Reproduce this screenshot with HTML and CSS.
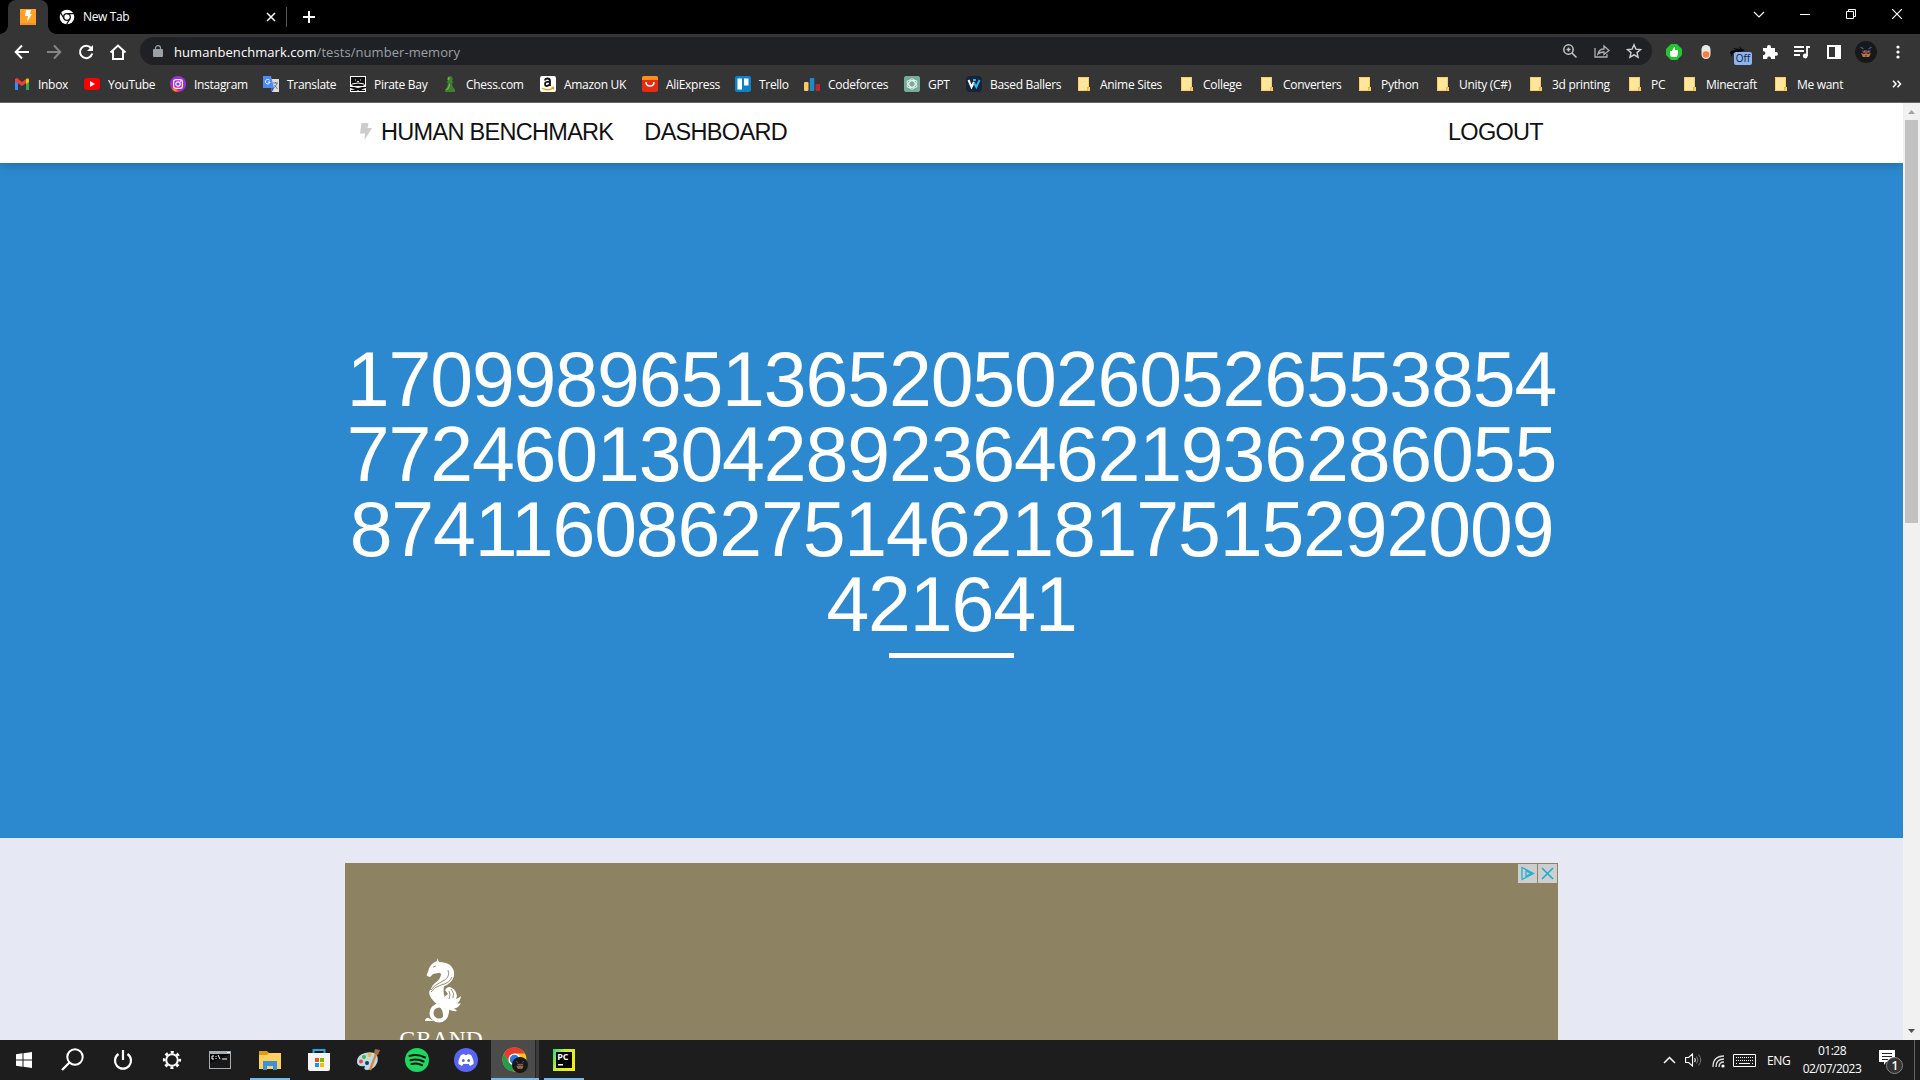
FILE: index.html
```html
<!DOCTYPE html>
<html lang="en">
<head>
<meta charset="utf-8">
<title>Human Benchmark</title>
<link rel="stylesheet" href="styles.css">
</head>
<body>
<svg class="defs" width="0" height="0">
  <symbol id="folder" viewBox="0 0 16 16"><path fill="#f7cf62" d="M2 1h11v10h1v4H2z"/><path fill="#ffe69c" d="M3 2h9v9l-1 3H3z"/><path fill="#e9b93d" d="M11 11h2v1h-1v3h-1z"/></symbol>
  <symbol id="avatar" viewBox="0 0 22 22"><circle cx="11" cy="11" r="11" fill="#17181a"/><path d="M5.500 6l3 2M16.500 6l-3 2" stroke="#3a5f96" stroke-width="1.200"/><path d="M7 9l2 1 2-1 2 1 3-1-1.500 3H8z" fill="#8f3f52"/><path d="M6 12l3 1 2-1 2 1 3-1-2 4H8z" fill="#b97a30"/><path d="M9 9.500h1v1.500H9zM13 9.500h1V11h-1z" fill="#4a94b5"/><path d="M10 14h2v1.500h-2z" fill="#743a80"/></symbol>
</svg>
<div class="screen">
  <header class="tabstrip">
    <div class="tab-active"><svg width="16" height="16" viewBox="0 0 16 16"><path fill="#ffa126" d="M0 0h16v16H0z"/><path fill="#f39220" d="M0 14h16v2H0z"/><path fill="#fff" d="M6 1h5L10 5h2L7 13l1-6H5z"/></svg></div>
    <div class="tab">
      <svg width="16" height="16" viewBox="0 0 16 16"><circle cx="8" cy="8" r="7.300" fill="#fff"/><circle cx="8" cy="8" r="3.300" fill="#fff" stroke="#111" stroke-width="1.300"/><path d="M8 4.700h7M5.100 9.700 1.700 3.900M10.900 9.700 7.500 15.500" stroke="#111" stroke-width="1.200"/></svg>
      <span class="tab-title">New Tab</span>
      <svg class="tab-close" width="10" height="10" viewBox="0 0 10 10"><path d="M1 1l8 8M9 1 1 9" stroke="#fff" stroke-width="1.500"/></svg>
    </div>
    <svg class="plus" width="12" height="12" viewBox="0 0 12 12"><path d="M6 0v12M0 6h12" stroke="#fff" stroke-width="2"/></svg>
    <div class="window-buttons">
      <svg width="12" height="12" viewBox="0 0 12 12"><path d="M1 4l5 5 5-5" fill="none" stroke="#fff" stroke-width="1.100"/></svg>
      <svg width="10" height="12" viewBox="0 0 10 12"><path d="M0 6.500h10" stroke="#fff"/></svg>
      <svg width="10" height="10" viewBox="0 0 10 10"><path d="M.5 2.500h7v7h-7zM2.500 2.500v-2h7v7h-2" fill="none" stroke="#fff"/></svg>
      <svg width="10" height="10" viewBox="0 0 10 10"><path d="M0 0l10 10M10 0 0 10" stroke="#fff" stroke-width="1.200"/></svg>
    </div>
  </header>

  <div class="toolbar">
    <div class="nav-buttons">
      <svg width="16" height="16" viewBox="0 0 16 16"><path d="M15 8H2M8 1.500 1.700 8 8 14.500" fill="none" stroke="#fff" stroke-width="2"/></svg>
      <svg width="16" height="16" viewBox="0 0 16 16"><path d="M1 8h13M8 1.500 14.300 8 8 14.500" fill="none" stroke="#858585" stroke-width="2"/></svg>
      <svg width="16" height="16" viewBox="0 0 16 16"><path d="M13 4A6.200 6.200 0 1 0 14.200 9.500" fill="none" stroke="#fff" stroke-width="2"/><path d="M15 1v6H9z" fill="#fff"/></svg>
      <svg width="18" height="16" viewBox="0 0 18 16"><path d="M1.500 8.500 9 1.500l7.500 7M4 7v8h10V7" fill="none" stroke="#fff" stroke-width="2"/></svg>
    </div>
    <div class="omnibox">
      <svg width="10" height="12" viewBox="0 0 10 12"><path fill="#9aa0a6" d="M1 4h8q1 0 1 1v6q0 1-1 1H1q-1 0-1-1V5q0-1 1-1z"/><path d="M2.500 5V3a2.500 2.300 0 0 1 5 0v2" fill="none" stroke="#9aa0a6" stroke-width="1.200"/></svg>
      <span class="url"><b>humanbenchmark.com</b>/tests/number-memory</span>
      <div class="omni-actions">
        <svg width="16" height="16" viewBox="0 0 16 16"><g fill="none" stroke="#c3c4c6" stroke-width="1.500"><circle cx="6.500" cy="6.500" r="4.700"/><path d="M10 10l4.500 4.500M6.500 4.500v4M4.500 6.500h4"/></g></svg>
        <svg width="16" height="16" viewBox="0 0 16 16"><g fill="none" stroke="#aeb0b3" stroke-width="1.300"><path d="M1 5v9h12v-3M4 11q1-5 6-5V3l5 4.500-5 4V9Q6 9 4 11z"/></g></svg>
        <svg width="16" height="16" viewBox="0 0 16 16"><path d="M8 1.800l1.900 4.300 4.700.4L11 9.600l1.100 4.600L8 11.800l-4.100 2.400L5 9.600 1.400 6.500l4.700-.4z" fill="none" stroke="#cfcfd1" stroke-width="1.400"/></svg>
      </div>
    </div>
    <div class="extensions">
      <svg width="16" height="16" viewBox="0 0 16 16"><path fill="#20c72f" d="M5 0h6l5 5v6l-5 5H5l-5-5V5z"/><path fill="#fff" d="M4 7h2l2-4h1v3h3v3l-1 4H6l-2-1z"/></svg>
      <svg width="16" height="16" viewBox="0 0 16 16"><rect x="3.500" y="1" width="9" height="14" rx="4.500" fill="#e8e8e6"/><circle cx="8" cy="10.500" r="3.300" fill="#fa7a38"/></svg>
      <div class="ext-off"><svg width="16" height="14" viewBox="0 0 16 14"><path d="M1 6l5-1L3 3l7 1-1-3 3 3 3 1-4 2 4 2-6-1-6 0-2 4V9l-1-1z" fill="#050505"/></svg><span class="off">Off</span></div>
      <svg width="16" height="16" viewBox="0 0 16 16"><path fill="#fff" d="M1 4h4V3a2 2 0 0 1 4 0v1h4v4h1a1.900 1.900 0 0 1 0 3.800h-1V15H9v-1a2 2 0 0 0-3.800 0v1H1v-4h1a2 2 0 0 0 0-3.800H1z"/></svg>
      <svg width="16" height="16" viewBox="0 0 16 16"><path d="M0 3h10M0 7h10M0 11h6M13 12V3h3" fill="none" stroke="#fff" stroke-width="1.800"/><circle cx="11.300" cy="12" r="2.400" fill="#fff"/></svg>
      <svg width="16" height="16" viewBox="0 0 16 16"><path d="M2 2h12v12H2z" fill="none" stroke="#fff" stroke-width="2"/><path fill="#fff" d="M9 1h6v14H9z"/></svg>
      <svg width="22" height="22"><use href="#avatar"/></svg>
      <svg width="16" height="16" viewBox="0 0 16 16"><g fill="#fff"><circle cx="8" cy="3" r="1.600"/><circle cx="8" cy="8" r="1.600"/><circle cx="8" cy="13" r="1.600"/></g></svg>
    </div>
  </div>

  <nav class="bookmarks">
    <a><svg viewBox="0 0 16 16"><path fill="#4285f4" d="M1 4v10h3V6z"/><path fill="#34a853" d="M15 4v10h-3V6z"/><path fill="#ea4335" d="M1 3l2-1 5 4 4-3v4l-4 3-7-5z"/><path fill="#fbbc04" d="M12 3q3-2 3 1v2l-3 2z"/></svg>Inbox</a>
    <a><svg viewBox="0 0 16 16"><rect y="2" width="16" height="12" rx="3" fill="#f00"/><path fill="#fff" d="M6 5l5 3-5 3z"/></svg>YouTube</a>
    <a><svg viewBox="0 0 16 16"><defs><radialGradient id="insta" cx=".25" cy="1"><stop offset="0" stop-color="#fed94f"/><stop offset=".35" stop-color="#fa6d31"/><stop offset=".65" stop-color="#f0128b"/><stop offset="1" stop-color="#a42ce0"/></radialGradient></defs><circle cx="8" cy="8" r="8" fill="url(#insta)"/><g fill="none" stroke="#fff" stroke-width="1.200"><rect x="3.600" y="3.600" width="8.800" height="8.800" rx="2.400"/><circle cx="8" cy="8" r="2.200"/></g><circle cx="10.700" cy="5.300" r=".7" fill="#fff"/></svg>Instagram</a>
    <a><svg viewBox="0 0 16 16"><path fill="#ddd" d="M6 3h10v13H9z"/><path fill="#4c8bf5" d="M0 0h8l3 12H0z"/><path d="M8 12h3l-2 4z" fill="#2857c4"/><path d="M6.500 4.200A2.300 2.300 0 1 0 7 6H5" fill="none" stroke="#fff"/><path d="M10 7h5M12.500 6v1M14 7q-1 4-3.500 5M11.500 9l3 4" fill="none" stroke="#647b88"/></svg>Translate</a>
    <a><svg viewBox="0 0 16 16"><path fill="#fff" d="M0 0h16v16H0z"/><path d="M1 1h14v7l-2 2H3L1 8zM0 11h4l4 1 4-1h4v1l-5 1.500 4 .5v1H9l-1-1-1 1H1v-1l4-.5L0 12z" fill="#111"/><path d="M2 8q6-2 12 0" fill="none" stroke="#fff"/><path d="M5 3.500h1v1H5zM10 3.500h1v1h-1zM7 5h2v1H7z" fill="#ddd"/></svg>Pirate Bay</a>
    <a><svg viewBox="0 0 16 16"><path fill="#427e31" d="M8 0a3 3 0 0 1 2 5l1.500 1L10 7.500q0 3.500 3 6V16H3v-2.500q3-2.500 3-6L4.500 6 6 5a3 3 0 0 1 2-5z"/><path fill="#7fb85a" d="M7 1q-2 1-1 3l2-1zM7 8h1q0 4-3 6H4q3-3 3-6"/></svg>Chess.com</a>
    <a><svg viewBox="0 0 16 16"><rect width="16" height="16" rx="2" fill="#fff"/><path d="M5 4.500Q5 2.500 7.500 2.500T10 5v5M9.500 5.700Q5 5.700 5 8t2 2 3-2.300" fill="none" stroke="#111" stroke-width="1.800"/><path d="M2 12q6 3.500 11 0M11.500 11.500h2v2" fill="none" stroke="#f90" stroke-width="1.300"/></svg>Amazon UK</a>
    <a><svg viewBox="0 0 16 16"><rect width="16" height="16" rx="2" fill="#e52d14"/><path d="M0 4V2q0-2 2-2h12q2 0 2 2v2z" fill="#ff8f17"/><path d="M4 6q0 4 4 4t4-4" fill="none" stroke="#fff" stroke-width="1.500"/></svg>AliExpress</a>
    <a><svg viewBox="0 0 16 16"><rect width="16" height="16" rx="2" fill="#0c82cc"/><path fill="#fff" d="M2.500 2.500H7v11H2.500zM9 2.500h4.500v7H9z"/></svg>Trello</a>
    <a><svg viewBox="0 0 16 16"><rect y="6" width="4.500" height="9" rx="1" fill="#f9cb57"/><rect x="5.800" y="2" width="4.500" height="13" rx="1" fill="#1d8bcb"/><rect x="11.500" y="8" width="4.500" height="7" rx="1" fill="#b42932"/></svg>Codeforces</a>
    <a><svg viewBox="0 0 16 16"><rect width="16" height="16" rx="2" fill="#76aa9b"/><g fill="none" stroke="#e6f4ef" stroke-width=".9"><ellipse cx="8" cy="8" rx="3" ry="5.400"/><ellipse cx="8" cy="8" rx="3" ry="5.400" transform="rotate(60 8 8)"/><ellipse cx="8" cy="8" rx="3" ry="5.400" transform="rotate(120 8 8)"/></g></svg>GPT</a>
    <a><svg viewBox="0 0 16 16"><rect width="16" height="16" rx="4" fill="#14243a"/><path d="M2.500 4l3 7L8 6" fill="none" stroke="#fff" stroke-width="2"/><path d="M8 7l2.300 4L13.500 4M7 4h3" fill="none" stroke="#2eb4f3" stroke-width="2"/></svg>Based Ballers</a>
    <a><svg><use href="#folder"/></svg>Anime Sites</a>
    <a><svg><use href="#folder"/></svg>College</a>
    <a><svg><use href="#folder"/></svg>Converters</a>
    <a><svg><use href="#folder"/></svg>Python</a>
    <a><svg><use href="#folder"/></svg>Unity (C#)</a>
    <a><svg><use href="#folder"/></svg>3d printing</a>
    <a><svg><use href="#folder"/></svg>PC</a>
    <a><svg><use href="#folder"/></svg>Minecraft</a>
    <a><svg><use href="#folder"/></svg>Me want</a>
    <svg class="more" width="10" height="8" viewBox="0 0 10 8"><path d="M1 .8 4 4 1 7.200M5.500.8l3 3.200-3 3.200" fill="none" stroke="#fff" stroke-width="1.500"/></svg>
  </nav>

  <div class="viewport">
    <main class="page">
      <div class="site-nav"><div class="container nav-row">
        <a class="brand"><svg width="12" height="18" viewBox="0 0 12 18"><path fill="#ccc" d="M1.500 0h7L7.500 5H12L4.500 17 5 10.500H0z"/></svg>HUMAN BENCHMARK</a>
        <a>DASHBOARD</a>
        <a class="logout">LOGOUT</a>
      </div></div>
      <section class="test"><div class="container">
        <div class="number">170998965136520502605265538547724601304289236462193628605587411608627514621817515292009421641</div>
        <div class="timer"></div>
      </div></section>
      <section class="below"><div class="container ad">
        <div class="ad-logo">
          <svg width="38" height="66" viewBox="0 0 38 66"><g fill="#fff"><path d="M12 0l2 4q13 0 15 10 1 8-7 13-9 3-16 8-1-6 4-10 6-4 6-9-1-2-3-1l-5 1-3 3-3-1q-1-2 1-4 1-8 9-11z"/><path d="M5 32q6-4 15-7-3 8 0 15 5 6 4 14-1 6-7 9 3-8-2-14-6-5-9-9-3-5-1-8z"/><path d="M19 42q0-4 4-6l-3-4q3-5 7-2 4 2 5 8l-1 3q3-1 5-3-1 6-4 7 2 1 4 0-3 6-7 5l3 3q-7 1-13-5zM0 62q2-4 5-1l4 2H0z"/></g><circle cx="14" cy="55" r="7.500" fill="none" stroke="#fff" stroke-width="4"/><g fill="none" stroke="#8d8262" stroke-width=".9"><path d="M23 12q3 8-7 12-8 4-10 8M27 19q-2 6-11 8-7 2-10 7M26 31q4 4 2 9M24 33q2 4 0 8M8 9l3-1"/></g></svg>
          <span>GRAND</span>
        </div>
        <div class="ad-choices">
          <i><svg width="15" height="15" viewBox="0 0 15 15"><path d="M2 1.500v12L13.500 7.500zM6 5v5.500l5-3z" fill="none" stroke="#25b1cf" stroke-width="1.300"/></svg></i>
          <i><svg width="13" height="13" viewBox="0 0 13 13"><path d="M1 1l11 11M12 1 1 12" stroke="#12afd0" stroke-width="1.500"/></svg></i>
        </div>
      </div></section>
    </main>
    <aside class="scrollbar">
      <svg width="17" height="17" viewBox="0 0 17 17"><path fill="#a3a3a3" d="M5 11l3.500-4 3.500 4z"/></svg>
      <div class="thumb"></div>
      <svg class="down" width="17" height="17" viewBox="0 0 17 17"><path fill="#505050" d="M5 6h7l-3.500 4z"/></svg>
    </aside>
  </div>

  <footer class="taskbar">
    <div class="apps">
      <div><svg class="nudge" width="16" height="16" viewBox="0 0 16 16"><path fill="#fff" d="M0 2.300 6.500 1.300v6.200H0zM7.500 1.200 16 0v7.500H7.500zM0 8.500h6.500v6.200L0 13.700zM7.500 8.500H16V16l-8.500-1.200z"/></svg></div>
      <div><svg class="nudge" width="24" height="24" viewBox="0 0 24 24"><circle cx="14" cy="9" r="7.700" fill="none" stroke="#fff" stroke-width="2"/><path d="M8.500 14.500l-7.500 7.500" stroke="#fff" stroke-width="2.300"/></svg></div>
      <div><svg width="20" height="22" viewBox="0 0 20 22"><path d="M5.500 5a8 8 0 1 0 9 0M10 1v10" fill="none" stroke="#fff" stroke-width="2.200"/></svg></div>
      <div><svg width="20" height="20" viewBox="0 0 20 20"><circle cx="10" cy="10" r="5.800" fill="none" stroke="#fff" stroke-width="2"/><circle cx="10" cy="10" r="7.800" fill="none" stroke="#fff" stroke-width="2.600" stroke-dasharray="3 3.126" stroke-dashoffset="1.500"/></svg></div>
      <div><svg class="nudge" width="22" height="20" viewBox="0 0 22 20"><path fill="#a5adb3" d="M0 1h22v18H0z"/><path fill="#050505" d="M1 4h20v14H1z"/><path fill="#373737" d="M1 13 21 4v14H1z" opacity=".4"/><path d="M18 2.500h3M5 6H3v3h2M7 6v1M7 8v1M9 5l2 4M13 9h5" fill="none" stroke="#fff"/></svg></div>
      <div class="open"><svg width="22" height="19" viewBox="0 0 22 19"><path fill="#e19b12" d="M0 0h8l2 2h12v4H0z"/><path fill="#ffd15c" d="M0 4h8l2-2h12v16H0z"/><path fill="#3b91dc" d="M4 10h14v9h-4v-4H8v4H4z"/></svg></div>
      <div><svg width="24" height="24" viewBox="0 0 24 24"><path d="M6.500 7V2h11v5" fill="none" stroke="#22a8e8" stroke-width="2"/><path fill="#f4f4f4" d="M1 5h22v16q0 2-2 2H3q-2 0-2-2z"/><path fill="#f25022" d="M8 10h4v4H8z"/><path fill="#7fba00" d="M13 10h4v4h-4z"/><path fill="#00a4ef" d="M8 15h4v4H8z"/><path fill="#ffb900" d="M13 15h4v4h-4z"/></svg></div>
      <div><svg width="24" height="24" viewBox="0 0 24 24"><path fill="#b9dcef" d="M1 14q0-7 8-9 7-2 11 1 3 4 1 9-3 7-10 7-4 0-2-4-8 1-8-4z"/><circle cx="5" cy="13.500" r="2" fill="#e64b3b"/><circle cx="8" cy="9" r="2" fill="#56af38"/><circle cx="13.500" cy="7" r="2" fill="#edbb24"/><circle cx="11" cy="15" r="2" fill="#273b4d"/><path d="M14 22 20 6" stroke="#e8832d" stroke-width="2.300"/><path d="M18 5l1-4 5 1-2 5z" fill="#a36b42"/></svg></div>
      <div><svg width="24" height="24" viewBox="0 0 24 24"><circle cx="12" cy="12" r="12" fill="#1ed760"/><path d="M4.500 8q8-2.500 15.500 1.500M5.500 12.200q7-2 13 1.300M6.500 16q6-1.500 10.500 1.200" fill="none" stroke="#111" stroke-width="2.100" stroke-linecap="round"/></svg></div>
      <div><svg width="24" height="24" viewBox="0 0 24 24"><circle cx="12" cy="12" r="12" fill="#5865f2"/><path fill="#fff" d="M7 7l3-1 1 1h2l1-1 3 1q3 5 2.500 9l-3.500 2-1.200-2H9.200L8 18l-3.500-2Q4 12 7 7z"/><ellipse cx="9.300" cy="12.500" rx="1.400" ry="1.600" fill="#5865f2"/><ellipse cx="14.700" cy="12.500" rx="1.400" ry="1.600" fill="#5865f2"/></svg></div>
      <div class="open active"><svg width="26" height="26" viewBox="0 0 26 26"><circle cx="12.500" cy="12.500" r="12" fill="#fbc51b"/><path fill="#e83c2f" d="M2 6.500A12 12 0 0 1 23 6.500H12.500L7 15.500z"/><path fill="#259c4d" d="M2 6.500l5 9 5.500 3-1 6A12 12 0 0 1 2 6.500z"/><circle cx="12.500" cy="12.500" r="6" fill="#fff"/><circle cx="12.500" cy="12.500" r="4.700" fill="#2878e6"/><use href="#avatar" x="10" y="10" width="16" height="16"/></svg></div>
      <div class="open"><svg width="22" height="22" viewBox="0 0 22 22"><defs><linearGradient id="pc" x2="1" y2=".5"><stop offset="0" stop-color="#1fd789"/><stop offset=".45" stop-color="#c8ed35"/><stop offset="1" stop-color="#f5e91d"/></linearGradient></defs><path fill="url(#pc)" d="M0 0h22v22H0z"/><path fill="#000" d="M3 3h16v16H3z"/><text x="4.200" y="11" class="pc-text">PC</text><path fill="#fff" d="M5 15h5v1.500H5z"/></svg></div>
    </div>
    <div class="tray">
      <svg width="13" height="8" viewBox="0 0 13 8"><path d="M1 7l5.500-5.500L12 7" fill="none" stroke="#fff" stroke-width="1.500"/></svg>
      <svg class="speaker" width="17" height="14" viewBox="0 0 17 14"><path d="M.6 4.500h3L7.500 1v12L3.600 9.500h-3zM9.500 5q1.500 2 0 4" fill="none" stroke="#fff" stroke-width="1.100"/><path d="M11.500 3.500q3 3.500 0 7M13.500 1.500q4.500 5.500 0 11" fill="none" stroke="#777"/></svg>
      <svg class="wifi" width="13" height="13" viewBox="0 0 13 13"><g fill="none" stroke="#ddd" stroke-width="1.300"><path d="M1 12Q1 1 12 1M4 12q0-8 8-8M7 12q0-5 5-5"/></g><circle cx="11" cy="11" r="1.600" fill="#fff"/></svg>
      <svg class="keyboard" width="23" height="13" viewBox="0 0 23 13"><path d="M.5.500h22v12H.5z" fill="none" stroke="#fff"/><path d="M3 3.500h17M3 6.500h17" stroke="#fff" stroke-dasharray="1 1"/><path d="M3 9.500h1M6 9.500h11M19 9.500h1" stroke="#fff"/></svg>
      <span class="lang">ENG</span>
      <span class="clock">01:28<br>02/07/2023</span>
      <svg class="notice" width="25" height="26" viewBox="0 0 25 26"><path fill="#fff" d="M0 1h16v12H7l-2 3v-3H0z"/><path d="M3 4.500h10M3 7.500h10M3 10.500h6" stroke="#222"/><circle cx="15.500" cy="16.500" r="8" fill="#333" stroke="#858585"/><text x="12.500" y="21" class="badge">1</text></svg>
    </div>
  </footer>
</div>
</body>
</html>
```
FILE: styles.css
```css
* { box-sizing: border-box; }
body { margin: 0; overflow: hidden; background: #000; font-family: "Open Sans", "Noto Sans", sans-serif; }
svg { display: block; flex: none; }
.defs { position: absolute; }
.screen { width: 1920px; height: 1080px; display: grid; grid-template-rows: 34px 34px 35px 937px 40px; }

/* Browser chrome */
.tabstrip { display: flex; align-items: center; background: #000; color: #fff; padding-left: 8px; }
.tab-active { position: relative; width: 40px; height: 34px; padding: 9px 12px; background: #353535; border-radius: 8px 8px 0 0; }
.tab-active::before, .tab-active::after { content: ""; position: absolute; bottom: 0; width: 8px; height: 8px; }
.tab-active::before { left: -8px; background: radial-gradient(circle at 0 0, transparent 7.500px, #353535 8px); }
.tab-active::after { right: -8px; background: radial-gradient(circle at 100% 0, transparent 7.500px, #353535 8px); }
.tab { display: flex; align-items: center; width: 239px; height: 20px; padding-left: 11px; border-right: 1px solid #555; font-size: 12px; letter-spacing: -.35px; }
.tab-title { margin: -1px 0 0 8px; }
.tab-close { margin: 0 10px 0 auto; }
.plus { margin-left: 16px; }
.window-buttons { display: flex; align-items: center; gap: 36px; margin: -6px 18px 0 auto; }
.window-buttons svg:first-child { margin-right: -1px; }
.toolbar { display: flex; align-items: center; background: #353535; padding: 2px 8px 0 14px; }
.nav-buttons { display: flex; align-items: center; width: 126px; gap: 16px; }
.nav-buttons svg:last-child { margin-left: -1px; }
.omnibox { display: flex; align-items: center; width: 1512px; height: 28px; margin-top: -2px; padding: 0 10px 0 13px; border-radius: 14px; background: #202124; }
.url { margin: 1px 0 0 11px; font-size: 13px; color: #9aa0a6; letter-spacing: .06px; }
.url b { font-weight: 400; color: #fff; }
.omni-actions { display: flex; gap: 16px; margin-left: auto; }
.extensions { display: flex; align-items: center; margin-left: 14px; gap: 16px; }
.extensions > :nth-child(7) { margin: 0 -3px; }
.ext-off { position: relative; width: 16px; height: 14px; }
.off { position: absolute; left: 4px; top: 7px; width: 18px; height: 13px; border-radius: 2px; background: #89b4f8; color: #202124; font-size: 10px; line-height: 13px; text-align: center; }
.bookmarks { display: grid; grid-template-columns: 70px 86px 93px 87px 92px 98px 102px 93px 69px 100px 62px 110px 103px 80px 98px 78px 93px 99px 55px 91px 119px 20px; padding: 0 0 2px 14px; align-items: center; background: #353535; color: #fff; border-bottom: 1px solid #656565; }
.bookmarks a { display: flex; align-items: center; gap: 8px; font-size: 12px; letter-spacing: -.3px; white-space: nowrap; }
.bookmarks a svg { width: 16px; height: 16px; }

/* Web page */
.viewport { display: grid; grid-template-columns: 1903px 17px; overflow: hidden; }
.page { display: flex; flex-direction: column; overflow: hidden; background: #e6e8f4; font-family: "Liberation Sans", Arial, sans-serif; }
.container { width: 1213px; margin: 0 auto; }
.site-nav { position: relative; flex: none; height: 60px; background: #fff; box-shadow: 0 0 12px rgba(0,0,0,.3); }
.nav-row { display: flex; align-items: center; gap: 31px; height: 58px; padding: 0 15px; font-size: 23.500px; letter-spacing: -.7px; color: #111; }
.brand { display: flex; align-items: center; gap: 9px; }
.logout { margin-left: auto; }
.test { flex: none; height: 675px; padding-top: 179px; background: #2c89cf; color: #fff; }
.number { font-size: 77px; line-height: 75px; letter-spacing: -1.120px; text-align: center; word-break: break-all; }
.timer { width: 125px; height: 5px; margin: 11px auto 0; background: #fff; }
.below { flex: 1; padding-top: 25px; overflow: hidden; }
.ad { display: flex; justify-content: space-between; align-items: flex-start; height: 312px; background: #8d8262; }
.ad-logo { display: flex; flex-direction: column; align-items: center; width: 84px; margin: 95px 0 0 54px; font: 23.500px/24px "Liberation Serif", serif; color: #fff; }
.ad-logo svg { margin-left: 6px; }
.ad-logo span { margin-top: 3px; }
.ad-choices { display: flex; gap: 1px; margin: 1px 1px 0 0; }
.ad-choices i { display: grid; place-items: center; width: 19px; height: 19px; background: #cecece; }
.scrollbar { display: flex; flex-direction: column; align-items: center; background: #f1f1f1; }
.thumb { width: 13px; height: 403px; background: #c1c1c1; }
.down { margin-top: auto; }

/* Taskbar */
.taskbar { display: flex; justify-content: space-between; background: #1d1d1d; color: #fff; }
.apps { display: grid; grid-template-columns: repeat(12, 49px); }
.apps div { display: grid; place-items: center; height: 40px; }
.apps .nudge { margin-right: 2px; }
.apps .open { background: linear-gradient(#76b9ed, #76b9ed) center bottom / 40px 2px no-repeat; }
.apps .active { width: 48px; margin-left: 1px; background: linear-gradient(#76b9ed, #76b9ed) left bottom / 48px 2px no-repeat, linear-gradient(90deg, #4b4b4b 44px, #232323 44px, #232323 45px, #3b3b3b 45px); }
.pc-text { font: bold 9px "Open Sans", sans-serif; fill: #fff; }
.tray { display: flex; align-items: center; width: 257px; font-size: 12px; letter-spacing: -.2px; }
.speaker { margin-left: 9px; }
.wifi { margin: 3px 0 0 10px; }
.keyboard { margin-left: 8px; }
.lang { width: 24px; margin-left: 11px; letter-spacing: -.4px; }
.clock { width: 66px; margin-left: 8px; line-height: 18px; text-align: center; letter-spacing: -.5px; }
.notice { margin: 3px 0 0 14px; }
.tray::after { content: ""; width: 1px; height: 40px; margin-left: 10px; background: #666; }
.badge { font: 600 12px "Open Sans", sans-serif; fill: #fff; }
```
